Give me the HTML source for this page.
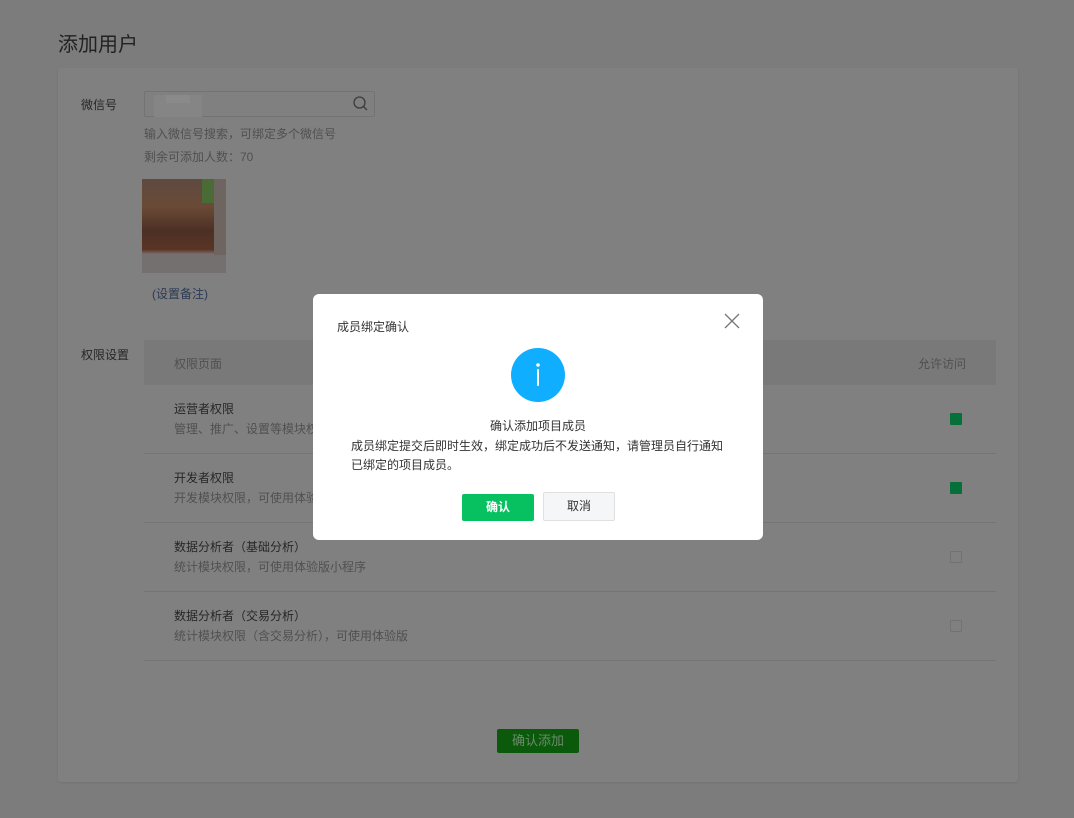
<!DOCTYPE html>
<html><head><meta charset="utf-8"><style>
*{margin:0;padding:0;box-sizing:border-box}
body{width:1074px;height:818px;background:#7b7c7b;font-family:"Liberation Sans","Noto Sans CJK SC",sans-serif;position:relative;overflow:hidden;color:#2b2b2b}
.a{position:absolute;white-space:nowrap}
.card{position:absolute;left:58px;top:68px;width:960px;height:714px;background:#808080;border-radius:3px;box-shadow:0 1px 2px rgba(0,0,0,.08)}
.s{font-size:12px;color:#505050}
.t{font-size:12px;color:#262626}
.line{position:absolute;left:144px;width:852px;height:1px;background:#747474}
.cb{position:absolute;left:950px;width:12px;height:12px;border-radius:1px}
</style></head><body>
<div class="a" style="left:58px;top:28px;font-size:20px;color:#222">添加用户</div>
<div class="card"></div>
<div class="a t" style="left:81px;top:96px">微信号</div>
<div class="a" style="left:144px;top:91px;width:231px;height:26px;border:1px solid #737373;border-radius:2px"></div>
<div class="a" style="left:154px;top:95px;width:48px;height:22px;background:#858585"></div>
<div class="a" style="left:166px;top:95px;width:24px;height:8px;background:#8a8a8a"></div>
<svg class="a" style="left:352px;top:95px" width="18" height="18" viewBox="0 0 18 18"><circle cx="7.5" cy="7.5" r="5.5" fill="none" stroke="#3c3c3c" stroke-width="1.3"/><path d="M11.5 11.5L15 15" stroke="#3c3c3c" stroke-width="1.4"/></svg>
<div class="a s" style="left:144px;top:125px">输入微信号搜索，可绑定多个微信号</div>
<div class="a s" style="left:144px;top:148px">剩余可添加人数：70</div>
<div class="a" style="left:142px;top:179px;width:84px;height:94px;background:linear-gradient(180deg,#5e4a40 0,#6a4a36 30%,#4c3024 55%,#5a3424 75%,#787070 80%,#6e6e6e 100%)"></div>
<div class="a" style="left:202px;top:179px;width:12px;height:24px;background:#4a6b36"></div>
<div class="a" style="left:214px;top:179px;width:12px;height:94px;background:#6f6560"></div>
<div class="a" style="left:142px;top:255px;width:84px;height:18px;background:#747070"></div>
<div class="a s" style="left:152px;top:285px;color:#2c3a55">(设置备注)</div>
<div class="a t" style="left:81px;top:346px">权限设置</div>
<div class="a" style="left:144px;top:340px;width:852px;height:45px;background:#797979"></div>
<div class="a s" style="left:174px;top:355px">权限页面</div>
<div class="a s" style="left:918px;top:355px">允许访问</div>
<div class="a t" style="left:174px;top:400px">运营者权限</div>
<div class="a s" style="left:174px;top:420px">管理、推广、设置等模块权限</div>
<div class="line" style="top:453px"></div>
<div class="a t" style="left:174px;top:469px">开发者权限</div>
<div class="a s" style="left:174px;top:489px">开发模块权限，可使用体验版</div>
<div class="line" style="top:522px"></div>
<div class="a t" style="left:174px;top:538px">数据分析者（基础分析）</div>
<div class="a s" style="left:174px;top:558px">统计模块权限，可使用体验版小程序</div>
<div class="line" style="top:591px"></div>
<div class="a t" style="left:174px;top:607px">数据分析者（交易分析）</div>
<div class="a s" style="left:174px;top:627px">统计模块权限（含交易分析），可使用体验版</div>
<div class="line" style="top:660px"></div>
<div class="cb" style="top:413px;background:#05703a"></div>
<div class="cb" style="top:482px;background:#05703a"></div>
<div class="cb" style="top:551px;border:1px solid #727272"></div>
<div class="cb" style="top:620px;border:1px solid #727272"></div>
<div class="a" style="left:497px;top:729px;width:82px;height:24px;background:#0b5a0c;border-radius:2px;color:#6d8a6c;font-size:13px;text-align:center;line-height:24px">确认添加</div>

<div class="a" style="left:313px;top:294px;width:450px;height:246px;background:#fff;border-radius:6px"></div>
<div class="a" style="left:337px;top:318px;font-size:12px;color:#333">成员绑定确认</div>
<svg class="a" style="left:724px;top:313px" width="16" height="16"><path d="M1 1L15 15M15 1L1 15" stroke="#777" stroke-width="1.3"/></svg>
<svg class="a" style="left:511px;top:348px" width="54" height="54"><circle cx="27" cy="27" r="27" fill="#10aeff"/><circle cx="27" cy="17" r="1.8" fill="#fff"/><rect x="26" y="21" width="2" height="17" rx="1" fill="#fff"/></svg>
<div class="a" style="left:313px;width:450px;top:417px;text-align:center;font-size:12px;color:#333">确认添加项目成员</div>
<div class="a" style="left:351px;top:437px;font-size:12px;color:#333;line-height:19px">成员绑定提交后即时生效，绑定成功后不发送通知，请管理员自行通知<br>已绑定的项目成员。</div>
<div class="a" style="left:462px;top:494px;width:72px;height:27px;background:#07c160;border-radius:2px;color:#fff;font-size:12px;font-weight:bold;text-align:center;line-height:27px">确认</div>
<div class="a" style="left:543px;top:492px;width:72px;height:29px;background:#f5f6f7;border:1px solid #e0e0e0;border-radius:2px;color:#333;font-size:12px;text-align:center;line-height:27px">取消</div>
</body></html>
